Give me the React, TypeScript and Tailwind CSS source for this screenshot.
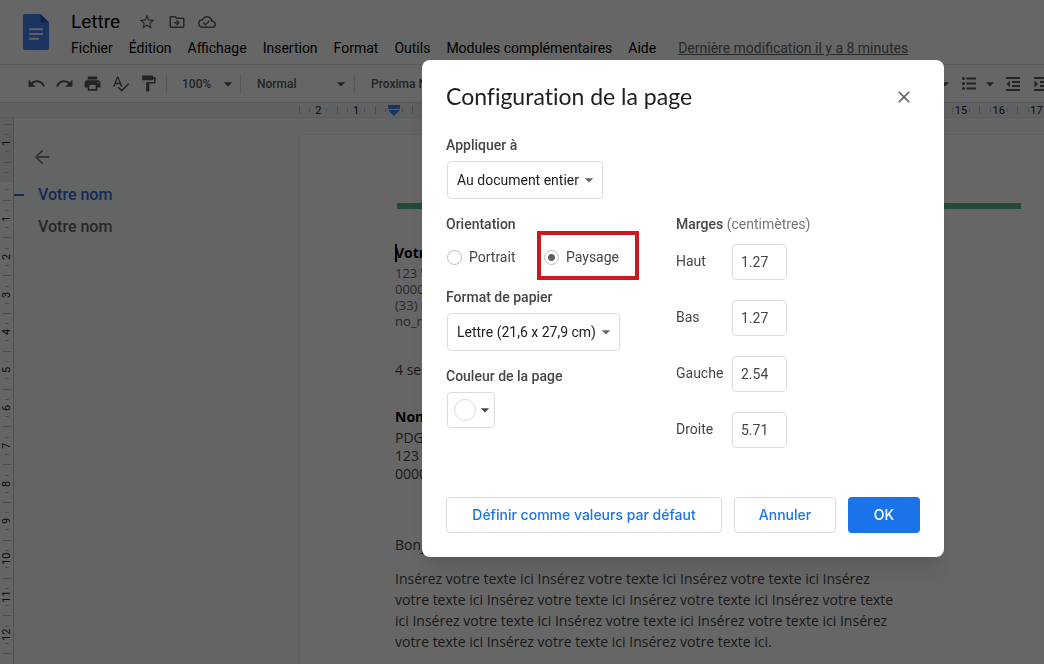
import { useState } from 'react';
import {
  MdArrowBack,
  MdArrowDropDown,
  MdClose,
  MdFormatPaint,
  MdOutlineCloudDone,
  MdOutlineDriveFileMove,
  MdPrint,
  MdRedo,
  MdSpellcheck,
  MdStarBorder,
  MdUndo,
} from 'react-icons/md';

const menus = [
  'Fichier',
  'Édition',
  'Affichage',
  'Insertion',
  'Format',
  'Outils',
  'Modules complémentaires',
  'Aide',
];

const historyTools = [
  { label: 'Annuler la frappe', Icon: MdUndo },
  { label: 'Rétablir', Icon: MdRedo },
  { label: 'Imprimer', Icon: MdPrint },
  { label: 'Orthographe', Icon: MdSpellcheck },
  { label: 'Reproduire la mise en forme', Icon: MdFormatPaint },
];

const horizontalMarks = ['2', '1', '', ...Array.from({ length: 17 }, (_, i) => String(i + 1))];
const verticalMarks = ['1', '', ...Array.from({ length: 12 }, (_, i) => String(i + 1)), ''];

const bodyLines = [
  'Insérez votre texte ici Insérez votre texte ici Insérez votre texte ici Insérez',
  'votre texte ici Insérez votre texte ici Insérez votre texte ici Insérez votre texte',
  'ici Insérez votre texte ici Insérez votre texte ici Insérez votre texte ici Insérez',
  'votre texte ici Insérez votre texte ici Insérez votre texte ici.',
];

function DocsLogo() {
  return (
    <svg viewBox="0 0 26 36" className="w-[26px] h-9" aria-hidden="true">
      <path d="M2.5 0H17.5L26 8.5V33.5A2.5 2.5 0 0 1 23.5 36H2.5A2.5 2.5 0 0 1 0 33.5V2.5A2.5 2.5 0 0 1 2.5 0Z" fill="#4285f4" />
      <path d="M17.5 0L26 8.5H17.5Z" fill="#2a56c6" />
      <path d="M6 14.2H20V16.2H6ZM6 19H20V21H6ZM6 23.8H16V25.8H6Z" fill="#f1f1f1" />
    </svg>
  );
}

function BulletListIcon() {
  return (
    <svg viewBox="0 0 14 13" className="w-[14px] h-[13px]" fill="currentColor" aria-hidden="true">
      <circle cx="1.5" cy="1.5" r="1.5" />
      <circle cx="1.5" cy="6.5" r="1.5" />
      <circle cx="1.5" cy="11.5" r="1.5" />
      <path d="M4.5 0.5H14V2.5H4.5ZM4.5 5.5H14V7.5H4.5ZM4.5 10.5H14V12.5H4.5Z" />
    </svg>
  );
}

function IndentIcon({ arrow }: { arrow: string }) {
  return (
    <svg viewBox="0 0 14 14" className="w-[14px] h-[14px]" fill="currentColor" aria-hidden="true">
      <path d="M0 0H14V2H0ZM6 4H14V6H6ZM6 8H14V10H6ZM0 12H14V14H0Z" />
      <path d={arrow} />
    </svg>
  );
}

function Divider() {
  return <span className="w-px h-5 bg-[#dadce0]" />;
}

function Header() {
  return (
    <header className="flex h-16 shrink-0 pl-[23px] pt-3">
      <div className="pt-0.5">
        <DocsLogo />
      </div>
      <div className="pl-[22px]">
        <div className="flex items-center h-5 gap-[10px] text-[#5f6368]">
          <h1 className="text-[19px] leading-5 text-black pr-2">Lettre</h1>
          <button aria-label="Ajouter aux favoris">
            <MdStarBorder className="w-[18px] h-[18px]" />
          </button>
          <button aria-label="Déplacer" className="pl-0.5">
            <MdOutlineDriveFileMove className="w-[18px] h-[18px]" />
          </button>
          <button aria-label="État du document" className="pl-0.5">
            <MdOutlineCloudDone className="w-[18px] h-[18px]" />
          </button>
        </div>
        <nav className="flex items-center gap-4 h-5 mt-1.5 text-sm text-black whitespace-nowrap">
          {menus.map((menu) => (
            <button key={menu}>{menu}</button>
          ))}
          <a href="#historique" className="pl-1.5 text-[#5f6368] underline">
            Dernière modification il y a 8 minutes
          </a>
        </nav>
      </div>
    </header>
  );
}

function Toolbar() {
  return (
    <div className="flex items-center h-[39px] shrink-0 overflow-hidden border-y border-[#dadce0] pl-[26px] text-xs font-medium text-[#55585c] whitespace-nowrap">
      <div className="flex items-center gap-2 pr-2">
        {historyTools.map(({ label, Icon }) => (
          <button key={label} aria-label={label} className="flex w-5 justify-center">
            <Icon className="w-[19px] h-[19px]" />
          </button>
        ))}
      </div>
      <Divider />
      <button className="flex items-center justify-between w-[73px] pl-[15px] pr-0.5">
        100%
        <MdArrowDropDown className="w-5 h-5" />
      </button>
      <Divider />
      <button className="flex items-center justify-between w-[113px] pl-4 pr-[3px]">
        Normal
        <MdArrowDropDown className="w-5 h-5" />
      </button>
      <Divider />
      <button className="pl-4">Proxima Nova</button>
      <div className="flex items-center ml-auto -mr-1">
        <MdArrowDropDown className="w-5 h-5 mr-[7px]" />
        <button aria-label="Liste à puces" className="flex items-center gap-1">
          <BulletListIcon />
          <MdArrowDropDown className="w-5 h-5" />
        </button>
        <button aria-label="Diminuer le retrait" className="pl-1.5">
          <IndentIcon arrow="M4 3.5V10.5L0.5 7Z" />
        </button>
        <button aria-label="Augmenter le retrait" className="pl-[14px]">
          <IndentIcon arrow="M0.5 3.5V10.5L4 7Z" />
        </button>
      </div>
    </div>
  );
}

function HorizontalRuler() {
  return (
    <div className="h-[15px] shrink-0 overflow-hidden bg-[#f1f3f4] border-b border-[#e3e5e8]">
      <div className="flex h-full ml-[299px] -mr-[11px] text-[11px] text-[#202124]">
        {horizontalMarks.map((mark, i) => (
          <div key={i} className="flex flex-1 items-center">
            <span className="w-px h-2 bg-[#bdc1c6]" />
            <span className="flex-1" />
            <span className="w-px h-1 bg-[#bdc1c6]" />
            <span className="flex w-4 justify-center leading-none">
              {mark || (
                <svg viewBox="0 0 12 11" className="w-3 h-[11px] shrink-0">
                  <path d="M0 0H12V4H0ZM0 5H12L6 11Z" fill="#4285f4" />
                </svg>
              )}
            </span>
            <span className="w-px h-1 bg-[#bdc1c6]" />
            <span className="flex-1" />
          </div>
        ))}
      </div>
    </div>
  );
}

function VerticalRuler() {
  return (
    <div className="w-[14px] shrink-0 overflow-hidden pt-1.5 border-r border-[#c4c7cc] bg-[linear-gradient(#e8eaed_64px,#fdfdfd_64px)]">
      <div className="flex flex-col h-[567px] text-[11px] text-[#202124]">
        {verticalMarks.map((mark, i) => (
          <div key={i} className="flex flex-col flex-1 items-center">
            <span className="h-px w-2 bg-[#bdc1c6]" />
            <span className="flex-1" />
            <span className="h-px w-1 bg-[#bdc1c6]" />
            <span className="flex h-4 items-center justify-center leading-none rotate-180 [writing-mode:vertical-rl]">
              {mark}
            </span>
            <span className="h-px w-1 bg-[#bdc1c6]" />
            <span className="flex-1" />
          </div>
        ))}
      </div>
    </div>
  );
}

function Outline() {
  return (
    <aside className="w-[285px] shrink-0 pt-7 text-base font-medium text-[#5f6368]">
      <button aria-label="Fermer le plan" className="block ml-[17px] text-[#80868b]">
        <MdArrowBack className="w-[22px] h-[22px]" />
      </button>
      <div className="flex items-center mt-[15px] text-[#3367d6]">
        <span className="w-[10px] h-0.5 mr-[14px] bg-[#3367d6]" />
        <a href="#votre-nom">Votre nom</a>
      </div>
      <a href="#destinataire" className="block mt-2 pl-6">
        Votre nom
      </a>
    </aside>
  );
}

function LetterPage() {
  return (
    <main className="flex-1 mt-4 pl-[95px] pr-[23px] bg-white border-l border-t border-[#eceef0] font-['Open_Sans',sans-serif] text-sm text-[#434343] whitespace-nowrap">
      <div className="h-1.5 mt-[68px] ml-0.5 bg-[#57bb8a]" />
      <h2 id="votre-nom" className="flex items-center mt-[34px] font-bold text-black">
        <span className="w-0.5 h-[18px] -mr-0.5 bg-black" />
        Votre nom
      </h2>
      <address className="mt-0.5 text-[13px] leading-4 not-italic text-[#666666]">
        <p>123 Votre rue</p>
        <p>00000 Votre ville</p>
        <p>(33) 0 00 00 00 00</p>
        <p>no_reply@example.com</p>
      </address>
      <p className="mt-[31px]">4 septembre 20XX</p>
      <h2 id="destinataire" className="mt-[27px] font-bold text-black">Nom du destinataire</h2>
      <p className="mt-0.5 leading-[18px]">PDG, Nom de la société</p>
      <p className="leading-[18px]">123 place principale</p>
      <p className="leading-[18px]">00000 Ville</p>
      <p className="mt-[52px]">Bonjour,</p>
      <div className="mt-[13px] leading-[21px]">
        {bodyLines.map((line) => (
          <p key={line}>{line}</p>
        ))}
      </div>
    </main>
  );
}

function SelectBox({ id, options, className }: { id: string; options: string[]; className: string }) {
  return (
    <div className={`relative ml-px mt-1.5 h-[38px] ${className}`}>
      <select
        id={id}
        className="w-full h-full appearance-none rounded border border-[#dadce0] bg-white pl-[9px] pr-5 text-sm text-[#202124]"
      >
        {options.map((option) => (
          <option key={option}>{option}</option>
        ))}
      </select>
      <MdArrowDropDown className="absolute right-1 top-[9px] w-5 h-5 text-[#5f6368] pointer-events-none" />
    </div>
  );
}

function PageSetupDialog() {
  const [orientation, setOrientation] = useState('Paysage');
  const [margins, setMargins] = useState<Record<string, string>>({
    Haut: '1.27',
    Bas: '1.27',
    Gauche: '2.54',
    Droite: '5.71',
  });

  return (
    <div
      role="dialog"
      aria-labelledby="dialog-title"
      className="w-[522px] rounded-lg bg-white px-6 pt-[22px] pb-6 shadow-xl text-sm text-[#444746]"
    >
      <div className="flex items-center justify-between h-[29px]">
        <h2
          id="dialog-title"
          className="font-[Lato,sans-serif] text-[23px] text-[#202124] [font-variant-ligatures:no-common-ligatures]"
        >
          Configuration de la page
        </h2>
        <button aria-label="Fermer" className="mr-1.5 text-[#5f6368]">
          <MdClose className="w-5 h-5" />
        </button>
      </div>

      <label htmlFor="apply-to" className="block mt-6 font-medium">
        Appliquer à
      </label>
      <SelectBox id="apply-to" options={['Au document entier']} className="w-[156px]" />

      <div className="flex mt-[15px]">
        <div className="w-[230px]">
          <fieldset>
            <legend className="font-medium">Orientation</legend>
            <div className="flex mt-[13px]">
              {['Portrait', 'Paysage'].map((value) => (
                <label key={value} className="relative flex items-center w-[97px] h-5 pl-px">
                  <input
                    type="radio"
                    name="orientation"
                    checked={orientation === value}
                    onChange={() => setOrientation(value)}
                    className="appearance-none w-[15px] h-[15px] mr-[7px] rounded-full border border-[#bdbdbd] checked:bg-[radial-gradient(#616161_3px,transparent_4px)]"
                  />
                  {value}
                  {value === 'Paysage' && (
                    <span className="absolute -left-[6px] -top-4 w-[102px] h-[49px] border-4 border-[#cc181e] pointer-events-none" />
                  )}
                </label>
              ))}
            </div>
          </fieldset>

          <label htmlFor="paper-size" className="block mt-5 font-medium">
            Format de papier
          </label>
          <SelectBox id="paper-size" options={['Lettre (21,6 x 27,9 cm)']} className="w-[173px]" />

          <p id="page-color" className="mt-[15px] font-medium">Couleur de la page</p>
          <button
            aria-labelledby="page-color"
            className="flex items-center w-12 h-9 ml-px mt-1.5 pl-1.5 rounded border border-[#dadce0]"
          >
            <span className="w-[22px] h-[22px] shrink-0 rounded-full border border-[#dadce0]" />
            <MdArrowDropDown className="w-5 h-5 -ml-px shrink-0 text-[#444746]" />
          </button>
        </div>

        <fieldset>
          <legend>
            <span className="font-medium">Marges</span> <span className="text-[#757575]">(centimètres)</span>
          </legend>
          <div className="flex flex-col gap-5 mt-[10px]">
            {Object.entries(margins).map(([name, value]) => (
              <label key={name} className="flex items-center">
                <span className="w-14 pb-0.5">{name}</span>
                <input
                  type="text"
                  value={value}
                  onChange={(e) => setMargins({ ...margins, [name]: e.target.value })}
                  className="w-[55px] h-9 rounded border border-[#dadce0] px-2"
                />
              </label>
            ))}
          </div>
        </fieldset>
      </div>

      <div className="flex justify-end gap-3 mt-[49px] font-[Inter,sans-serif] text-sm font-medium text-[#1a73e8]">
        <button className="w-[276px] h-9 rounded border border-[#dadce0]">
          Définir comme valeurs par défaut
        </button>
        <button className="w-[102px] h-9 rounded border border-[#dadce0]">Annuler</button>
        <button className="w-[72px] h-9 rounded bg-[#1a73e8] text-white">OK</button>
      </div>
    </div>
  );
}

export default function App() {
  return (
    <div className="font-[Roboto,sans-serif]">
      <div className="flex flex-col h-screen overflow-hidden bg-white">
        <Header />
        <Toolbar />
        <HorizontalRuler />
        <div className="flex flex-1 min-h-0 overflow-hidden bg-[#f8faf9]">
          <VerticalRuler />
          <Outline />
          <LetterPage />
        </div>
      </div>
      <div className="fixed inset-0 flex items-start justify-end pt-[60px] pr-[100px] bg-black/60">
        <PageSetupDialog />
      </div>
    </div>
  );
}
